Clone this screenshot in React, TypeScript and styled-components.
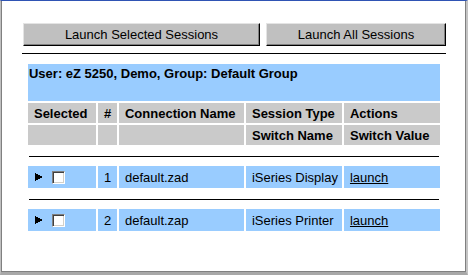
import React from "react";
import styled, { createGlobalStyle } from "styled-components";

const GlobalStyle = createGlobalStyle`
  html, body {
    margin: 0;
    padding: 0;
    background: #ffffff;
  }
  body {
    font-family: "Liberation Sans", Arial, sans-serif;
    font-size: 13px;
    color: #000000;
  }
`;

interface Session {
  id: number;
  name: string;
  type: string;
}

const sessions: Session[] = [
  { id: 1, name: "default.zad", type: "iSeries Display" },
  { id: 2, name: "default.zap", type: "iSeries Printer" },
];

const columnWidths = [68, 19, 125, 96, 96];

const Frame = styled.div`
  width: 468px;
  height: 275px;
  box-sizing: border-box;
  border-style: solid;
  border-width: 1px 2px 3px 1px;
  border-color: #2f54b4 #c4c4c4 #a8a8a8 #c0c0c0;
  box-shadow: inset 1px 0 0 #808080, inset -1px -1px 0 #808080;
  padding: 22px 0 0 21px;
`;

const Panel = styled.div`
  width: 424px;
`;

const ButtonRow = styled.div`
  display: flex;
  gap: 6px;
  padding-left: 1px;
`;

const LaunchButton = styled.button<{ $width: number }>`
  width: ${(p) => p.$width}px;
  height: 23px;
  box-sizing: border-box;
  margin: 0;
  padding: 0;
  background: #c0c0c0;
  border-style: solid;
  border-width: 1px;
  border-color: #e4e4e4 #000000 #000000 #e4e4e4;
  box-shadow: inset -1px -1px 0 #808080;
  font-family: "Liberation Sans", Arial, sans-serif;
  font-size: 13px;
  color: #000000;
  cursor: pointer;
`;

const Divider = styled.div`
  height: 1px;
  background: #000000;
  margin-top: 7px;
`;

const SessionTable = styled.table`
  width: 416px;
  margin: 8px auto 0;
  border-spacing: 2px;
  border-collapse: separate;
  table-layout: fixed;
`;

const Col = styled.col<{ $width: number }>`
  width: ${(p) => p.$width}px;
`;

const UserCell = styled.td`
  height: 37px;
  box-sizing: border-box;
  padding: 2px 1px 0;
  vertical-align: top;
  background: #99ccff;
  font-weight: bold;
  line-height: 15px;
  white-space: nowrap;
`;

const HeadCell = styled.th`
  height: 20px;
  box-sizing: border-box;
  padding: 0 0 0 6px;
  text-align: left;
  vertical-align: middle;
  background: #cacaca;
  font-weight: bold;
  white-space: nowrap;
  overflow: hidden;
`;

const DataCell = styled.td`
  height: 22px;
  box-sizing: border-box;
  padding: 0 0 0 6px;
  vertical-align: middle;
  background: #99ccff;
  white-space: nowrap;
  overflow: hidden;
`;

const RuleCell = styled.td`
  height: 17px;
  padding: 0 1px;
  vertical-align: middle;
`;

const RowRule = styled.div`
  height: 1px;
  background: #000000;
  margin-top: 1px;
`;

const SelectBox = styled.div`
  display: flex;
  align-items: center;
  gap: 9px;
  padding-left: 1px;
`;

const Expand = styled.svg`
  display: block;
  width: 8px;
  height: 8px;
`;

const Check = styled.input`
  appearance: none;
  -webkit-appearance: none;
  display: block;
  margin: 0;
  width: 13px;
  height: 13px;
  box-sizing: border-box;
  background: #ffffff;
  border-style: solid;
  border-width: 1px;
  border-color: #808080 #ffffff #ffffff #808080;
  box-shadow: inset 1px 1px 0 #404040, inset -1px -1px 0 #d4d0c8;
`;

const LaunchLink = styled.a`
  color: #000000;
  text-decoration: underline;
  cursor: pointer;
`;

export default function App() {
  return (
    <>
      <GlobalStyle />
      <Frame>
        <Panel>
          <ButtonRow>
            <LaunchButton $width={237}>Launch Selected Sessions</LaunchButton>
            <LaunchButton $width={180}>Launch All Sessions</LaunchButton>
          </ButtonRow>
          <Divider />
          <SessionTable>
            <colgroup>
              {columnWidths.map((w, i) => (
                <Col key={i} $width={w} />
              ))}
            </colgroup>
            <tbody>
              <tr>
                <UserCell colSpan={5}>User: eZ 5250, Demo, Group: Default Group</UserCell>
              </tr>
              <tr>
                <HeadCell>Selected</HeadCell>
                <HeadCell>#</HeadCell>
                <HeadCell>Connection Name</HeadCell>
                <HeadCell>Session Type</HeadCell>
                <HeadCell>Actions</HeadCell>
              </tr>
              <tr>
                <HeadCell />
                <HeadCell />
                <HeadCell />
                <HeadCell>Switch Name</HeadCell>
                <HeadCell>Switch Value</HeadCell>
              </tr>
              {sessions.map((s) => (
                <React.Fragment key={s.id}>
                  <tr>
                    <RuleCell colSpan={5}>
                      <RowRule />
                    </RuleCell>
                  </tr>
                  <tr>
                    <DataCell>
                      <SelectBox>
                        <Expand viewBox="0 0 8 8" shapeRendering="crispEdges">
                          <polygon points="0,0 8,4 0,8" fill="#000000" />
                        </Expand>
                        <Check type="checkbox" />
                      </SelectBox>
                    </DataCell>
                    <DataCell>{s.id}</DataCell>
                    <DataCell>{s.name}</DataCell>
                    <DataCell>{s.type}</DataCell>
                    <DataCell>
                      <LaunchLink>launch</LaunchLink>
                    </DataCell>
                  </tr>
                </React.Fragment>
              ))}
            </tbody>
          </SessionTable>
        </Panel>
      </Frame>
    </>
  );
}
